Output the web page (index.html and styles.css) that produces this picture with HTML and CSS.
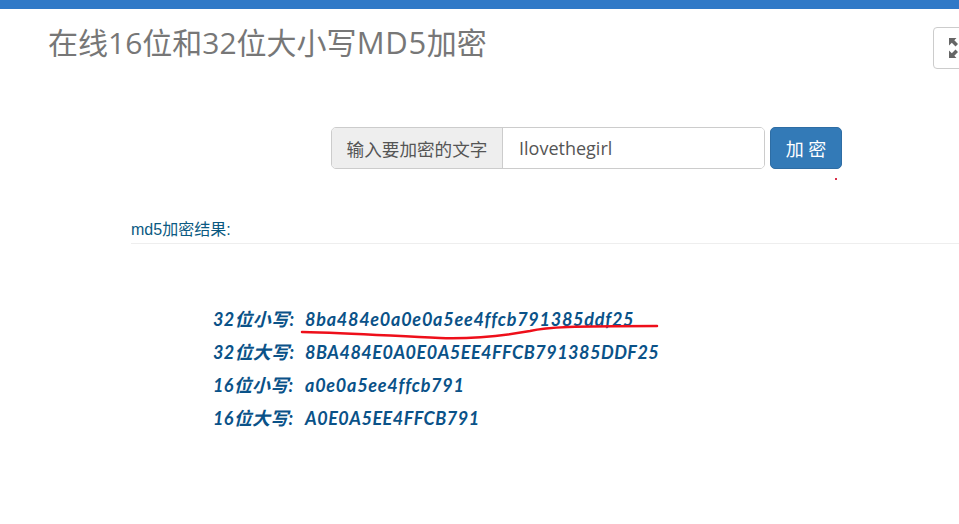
FILE: index.html
```html
<!DOCTYPE html>
<html lang="zh">
<head>
<meta charset="utf-8">
<title>在线16位和32位大小写MD5加密</title>
<link rel="stylesheet" href="styles.css">
</head>
<body>
<div class="topbar"></div>
<header class="head">
  <h1 class="title">在线16位和32位大小写<span class="latin">MD5</span>加密</h1>
  <button class="expand" type="button" aria-label="全屏">
    <svg viewBox="0 0 9 20" width="9" height="20"><path class="arrow" d="M0 0h7.500L5.300 2.200 9 5.900 6.500 8.400 2.800 4.700 0 7.500z"/><path class="arrow" d="M0 20v-7.500l2.800 2.800 3.700-3.700L9 14.100l-3.700 3.700L7.500 20z"/></svg>
  </button>
</header>
<form class="search">
  <div class="group">
    <span class="addon">输入要加密的文字</span>
    <input class="field" type="text" value="Ilovethegirl">
  </div>
  <button class="submit" type="button">加 密</button>
</form>
<section class="result">
  <div class="result-label">md5加密结果:</div>
  <div class="lines">
    <p class="line"><span class="key">32位小写:</span><span class="lower">8ba484e0a0e0a5ee4ffcb791385ddf25</span></p>
    <p class="line"><span class="key">32位大写:</span><span class="upper">8BA484E0A0E0A5EE4FFCB791385DDF25</span></p>
    <p class="line"><span class="key">16位小写:</span><span class="lower">a0e0a5ee4ffcb791</span></p>
    <p class="line"><span class="key">16位大写:</span><span class="upper">A0E0A5EE4FFCB791</span></p>
    <svg class="scribble" viewBox="0 0 359 20" width="359" height="20"><path d="M0 7C50 8 90 11 138 13C170 14 200 11 228 6C245 2 270 1 355 1"/></svg>
  </div>
</section>
<span class="dot"></span>
</body>
</html>
```
FILE: styles.css
```css
* { box-sizing: border-box; }
html, body { margin: 0; padding: 0; height: 100%; overflow: hidden; background: #fff; }
body { position: relative; font-family: "Open Sans", "Noto Sans CJK SC", sans-serif; color: #555; }
.topbar { height: 9px; background: #3079c7; }
.head { display: flex; justify-content: space-between; align-items: flex-start; padding: 13px 0 0 48px; height: 118px; }
.title { margin: 0; font-family: "Open Sans", "Noto Sans CJK SC", sans-serif; font-size: 30px; line-height: 40px; font-weight: 400; color: #777; }
.latin { font-size: 31px; letter-spacing: 0.7px; }
.expand { width: 40px; height: 42px; margin: 5px -14px 0 0; flex: none; padding: 0 0 0 15px; display: flex; align-items: center; background: #fff; border: 1px solid #ccc; border-radius: 4px; }
.arrow { fill: #666; }
.search { display: flex; gap: 5px; padding-left: 331px; }
.group { display: flex; width: 434px; height: 42px; border: 1px solid #ccc; border-radius: 5px; overflow: hidden; }
.addon { flex: none; width: 171px; display: flex; align-items: center; justify-content: center; background: #eee; border-right: 1px solid #ccc; font-size: 17.6px; color: #555; }
.field { flex: 1; min-width: 0; border: 0; padding: 0 16px; outline: 0; font-family: "Open Sans", sans-serif; font-size: 18px; color: #555; background: #fff; }
.submit { width: 72px; height: 42px; padding: 0; background: #337ab7; border: 1px solid #2e6da4; border-radius: 5px; color: #fff; font-family: "Open Sans", "Noto Sans CJK SC", sans-serif; font-size: 18px; }
.result { margin: 50px 0 0 131px; }
.result-label { height: 25px; font-family: "Liberation Sans", "Noto Sans CJK SC", sans-serif; font-size: 16px; line-height: 21px; color: #0b5a82; border-bottom: 1px solid #eee; }
.lines { position: relative; margin: 59px 0 0 82px; }
.line { display: flex; margin: 0; height: 33px; font-family: "Lato", "Noto Sans CJK SC", sans-serif; font-size: 18px; line-height: 33px; font-weight: 700; font-style: italic; color: #0a5288; white-space: pre; }
.key { flex: none; width: 92px; letter-spacing: 0.3px; }
.lower { letter-spacing: 0.75px; }
.upper { letter-spacing: 0.5px; }
.scribble { position: absolute; left: 89px; top: 22px; overflow: visible; }
.scribble path { fill: none; stroke: #ee0f1a; stroke-width: 2.5; stroke-linecap: round; }
.dot { position: absolute; left: 835px; top: 178px; width: 2px; height: 2px; background: #d8304a; }
```
